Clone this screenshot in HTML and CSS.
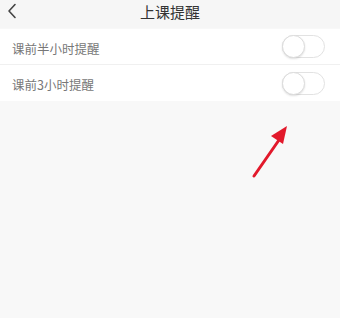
FILE: index.html
```html
<!DOCTYPE html>
<html lang="zh-CN">
<head>
    <meta charset="UTF-8">
    <meta name="viewport" content="width=device-width, initial-scale=1.0">
    <title>上课提醒</title>
    <link rel="stylesheet" href="styles.css">
</head>
<body>
    <header class="topbar">
        <svg class="back" width="10" height="16" viewBox="0 0 10 16">
            <path d="M8 1.5 L2 8 L8 14.5" fill="none" stroke="#444" stroke-width="1.6" stroke-linecap="round" stroke-linejoin="round"/>
        </svg>
        <h1>上课提醒</h1>
    </header>

    <section class="list">
        <div class="row">
            <span class="label">课前半小时提醒</span>
            <span class="switch"><span class="knob"></span></span>
        </div>
        <div class="row">
            <span class="label">课前3小时提醒</span>
            <span class="switch"><span class="knob"></span></span>
        </div>
    </section>

    <!-- red arrow pointing at the second switch -->
    <svg class="arrow" width="50" height="60" viewBox="0 0 50 60">
        <line x1="5" y1="53" x2="30" y2="17" stroke="#e2192b" stroke-width="3" stroke-linecap="round"/>
        <polygon points="38,3 22,13 34,21" fill="#e2192b"/>
    </svg>
</body>
</html>
```

FILE: styles.css
```css
body {
    margin: 0;
    padding: 0;
    width: 340px;
    height: 318px;
    background-color: #f8f8f8;
    font-family: "Noto Sans CJK SC", "Noto Sans", sans-serif;
    position: relative;
    overflow: hidden;
}
.topbar {
    height: 28px;
    display: flex;
    align-items: center;
    justify-content: center;
    position: relative;
    background-color: #f6f6f6;
}
.topbar h1 {
    margin: 0;
    font-size: 15px;
    font-weight: normal;
    color: #333;
    line-height: 20px;
    margin-top: -4px;
}
.back {
    position: absolute;
    left: 7px;
    top: 3px;
}
.list {
    margin-top: 1px;
    background-color: #fff;
}
.row {
    height: 35px;
    display: flex;
    align-items: center;
    justify-content: space-between;
    padding: 0 15px 0 12px;
    border-bottom: 1px solid #f0f0f0;
}
.row:last-child {
    border-bottom: none;
    height: 36px;
}
.label {
    font-size: 12.5px;
    color: #777;
    margin-top: 3px;
}
.switch {
    width: 43px;
    height: 23px;
    box-sizing: border-box;
    border: 1px solid #e2e2e2;
    border-radius: 12px;
    background-color: #fff;
    position: relative;
}
.knob {
    position: absolute;
    left: -1px;
    top: -1px;
    width: 23px;
    height: 23px;
    box-sizing: border-box;
    border-radius: 50%;
    border: 1px solid #dcdcdc;
    background-color: #fff;
    box-shadow: 0 1px 2px rgba(0, 0, 0, 0.12);
}
.arrow {
    position: absolute;
    left: 249px;
    top: 123px;
}
```
